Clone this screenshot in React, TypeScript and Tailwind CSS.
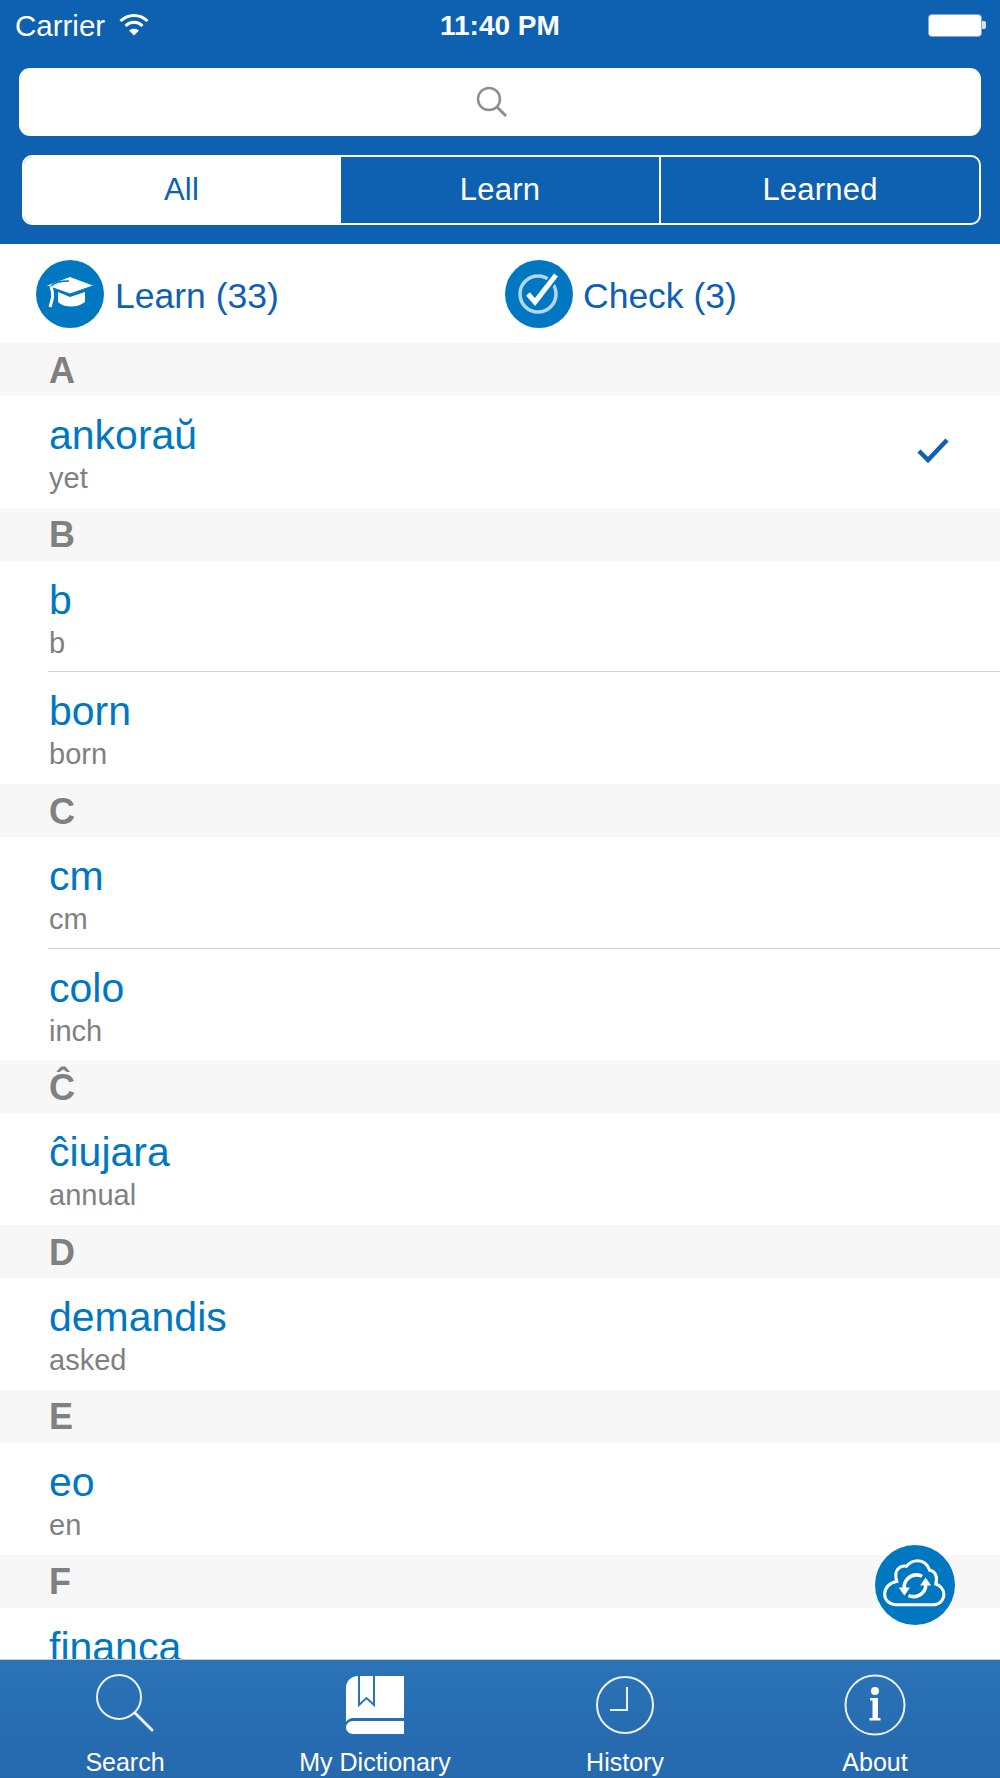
const sections = [
  { letter: "A", rows: [{ word: "ankoraŭ", meaning: "yet", checked: true }] },
  { letter: "B", rows: [{ word: "b", meaning: "b" }, { word: "born", meaning: "born" }] },
  { letter: "C", rows: [{ word: "cm", meaning: "cm" }, { word: "colo", meaning: "inch" }] },
  { letter: "Ĉ", rows: [{ word: "ĉiujara", meaning: "annual" }] },
  { letter: "D", rows: [{ word: "demandis", meaning: "asked" }] },
  { letter: "E", rows: [{ word: "eo", meaning: "en" }] },
  { letter: "F", rows: [{ word: "financa", meaning: "" }] },
];

const CapIcon = () => (
  <svg width="68" height="68" viewBox="0 0 68 68" className="shrink-0">
    <circle cx="34" cy="34" r="34" fill="#0078c1" />
    <path d="M22 32v10c3 3 8 4.500 13 4.500s10-1.500 14-4.500V32l-15 5z" fill="#fff" />
    <path d="M10 25.500l24-9 24 9-24 8.500z" fill="#fff" stroke="#0078c1" strokeWidth="1" />
    <path d="M33 21c-8 0-15 2-18 5" fill="none" stroke="#0078c1" strokeWidth="1.500" />
    <path d="M15 27c2 5 2 9 1 13l-2 7" fill="none" stroke="#fff" strokeWidth="3" />
  </svg>
);

const CheckIcon = () => (
  <svg width="68" height="68" viewBox="0 0 68 68" className="shrink-0">
    <circle cx="34" cy="34" r="34" fill="#0078c1" />
    <circle cx="33" cy="34" r="18" fill="none" stroke="#fff" strokeOpacity="0.7" strokeWidth="3.500" />
    <path d="M23 34l7 8 22-28" fill="none" stroke="#0078c1" strokeWidth="9" />
    <path d="M23 34l7 8 21-27" fill="none" stroke="#fff" strokeWidth="5" />
  </svg>
);

const TabSearch = () => (
  <svg width="62" height="60" viewBox="0 0 62 60" fill="none" stroke="#fff" strokeOpacity="0.9" className="ml-[2px] -mt-[4px]">
    <circle cx="24" cy="24" r="22" strokeWidth="2" />
    <path d="M40 40l17 17" strokeWidth="3" strokeLinecap="round" />
  </svg>
);

const TabBook = () => (
  <svg width="58" height="58" viewBox="0 0 58 58">
    <path d="M12 0H58V42H8C4 42 1 44 0 46V12C0 5 5 0 12 0Z" fill="#fff" />
    <path d="M13 0V29L20.500 22L28 29V0" fill="none" stroke="#2b72b6" strokeWidth="2" />
    <path d="M7 45H58V58H7C3 58 0 55 0 51.500S3 45 7 45Z" fill="#fff" />
  </svg>
);

const TabClock = () => (
  <svg width="60" height="60" viewBox="0 0 60 60" fill="none" stroke="#fff" strokeOpacity="0.9">
    <circle cx="30" cy="30" r="28" strokeWidth="2" />
    <path d="M32 12V35H15" strokeWidth="2" />
  </svg>
);

const TabInfo = () => (
  <svg width="62" height="62" viewBox="0 0 62 62">
    <circle cx="31" cy="31" r="29.500" fill="none" stroke="#fff" strokeOpacity="0.9" strokeWidth="2" />
    <circle cx="31" cy="17" r="4" fill="#fff" />
    <path d="M26 24h8v20h2.500v2.500h-11V44h3V26.500H26z" fill="#fff" />
  </svg>
);

const tabs = [
  { label: "Search", icon: <TabSearch /> },
  { label: "My Dictionary", icon: <TabBook /> },
  { label: "History", icon: <TabClock /> },
  { label: "About", icon: <TabInfo /> },
];

const App = () => {
  return (
    <div className="relative w-[1000px] h-[1778px] flex flex-col overflow-hidden bg-white font-['Liberation_Sans',Arial,sans-serif]">
      <header className="bg-[#0e60b0] h-[244px] shrink-0 flex flex-col">
        <div className="h-[52px] pl-[15px] pr-[14px] flex items-center text-white relative">
          <span className="text-[29.500px] leading-none">Carrier</span>
          <svg width="30" height="23" viewBox="0 0 30 23" className="ml-[14px] -mt-[4px]" fill="none" stroke="#fff" strokeWidth="3">
            <path d="M1.500 8C9 0.500 21 0.500 28.500 8" />
            <path d="M6.500 13c5-5 12-5 17 0" />
            <path d="M15 22.500l-5-5c3-2.500 7-2.500 10 0z" fill="#fff" stroke="none" />
          </svg>
          <span className="absolute left-[440px] text-[28px] font-bold leading-none">11:40 PM</span>
          <div className="ml-auto -mt-[2px] flex items-center">
            <div className="w-[54px] h-[23px] rounded-[4px] bg-white border-[1.500px] border-[#7fa9d6]" />
            <div className="w-[4px] h-[8px] bg-[#d5e2f0] rounded-r-[2px]" />
          </div>
        </div>
        <div className="mt-[16px] ml-[19px] mr-[19px] h-[68px] rounded-[11px] bg-white flex items-center justify-center">
          <svg width="32" height="32" viewBox="0 0 32 32" fill="none" stroke="#8e8e8e" className="mr-[16px]">
            <circle cx="13" cy="13" r="11" strokeWidth="2.500" />
            <path d="M21 21l9 9" strokeWidth="3" />
          </svg>
        </div>
        <div className="mt-[19px] ml-[22px] mr-[19px] h-[70px] grid grid-cols-[317px_320px_1fr] rounded-[10px] border-2 border-white text-[31px] tracking-[0.2px] text-white overflow-hidden">
          <div className="bg-white text-[#0e60b0] flex items-center justify-center pr-[2px]">All</div>
          <div className="flex items-center justify-center border-r-2 border-white">Learn</div>
          <div className="flex items-center justify-center">Learned</div>
        </div>
      </header>

      <div className="h-[99px] shrink-0 pl-[36px] flex items-center text-[35.500px] text-[#0e60b0]">
        <div className="w-[469px] flex items-center gap-[11px]">
          <CapIcon />
          <span className="mt-[6px]">Learn (33)</span>
        </div>
        <div className="flex items-center gap-[10px]">
          <CheckIcon />
          <span className="mt-[6px]">Check (3)</span>
        </div>
      </div>

      <main className="flex-1 min-h-0 overflow-hidden">
        {sections.map((section) => (
          <section key={section.letter}>
            <div className="h-[53px] bg-[#f7f7f7] pl-[49px] pt-[2px] flex items-center text-[36px] leading-[40px] font-bold text-[#808080]">
              {section.letter}
            </div>
            {section.rows.map((row, index) => (
              <div key={row.word} className="relative h-[111.700px]">
                {index > 0 && <div className="absolute top-[-1px] left-[48px] right-0 h-px bg-[#d2d2d2]" />}
                <div className="pl-[49px] pt-[16px]">
                  <p className="text-[41px] leading-[47px] text-[#0078c1]">{row.word}</p>
                  <p className="mt-[3px] text-[29px] leading-[32px] text-[#808080]">{row.meaning}</p>
                </div>
                {row.checked && (
                  <svg width="32" height="26" viewBox="0 0 32 26" fill="none" stroke="#0e60b0" strokeWidth="4.500" className="absolute right-[51px] top-[42px]">
                    <path d="M2 13l9 9L30 2" />
                  </svg>
                )}
              </div>
            ))}
          </section>
        ))}
      </main>

      <nav className="h-[119px] shrink-0 grid grid-cols-4 border-t border-[#c4c8cc] bg-gradient-to-b from-[#2b72b6] to-[#2569af] text-white text-[25px] leading-none">
        {tabs.map((tab) => (
          <div key={tab.label} className="relative flex flex-col items-center">
            <div className="h-[90px] flex items-center">{tab.icon}</div>
            <span>{tab.label}</span>
          </div>
        ))}
      </nav>

      <button className="absolute left-[875px] top-[1545px] w-[80px] h-[80px] rounded-full bg-[#0078c1]">
        <svg width="80" height="80" viewBox="0 0 79 79" fill="none" stroke="#fff">
          <path d="M21 59H57C63.500 59 68 54.500 68 49C68 44 64.500 40 60 38.500C62 32 60 26 54 25C52 19 47.500 15.500 42 15.500C37 15.500 33.500 18 31 21C25 20 20.500 24 20.500 30C20.500 32 21 34 21.500 36C14.500 37 9.500 42.500 9.500 48.500C9.500 54.500 14.500 59 21 59Z" strokeWidth="3" />
          <path d="M29 43C28 36 34 29.500 41 29.500C43 29.500 45 30 46.500 31" strokeWidth="3.500" />
          <path d="M50 38C51 45 45 51 38 51C36 51 34.500 50.500 33 50" strokeWidth="3.500" />
          <path d="M23.500 42h11l-5.500 8zM44.500 40h11l-5.500-8z" fill="#fff" stroke="none" />
        </svg>
      </button>
    </div>
  );
};

export default App;
